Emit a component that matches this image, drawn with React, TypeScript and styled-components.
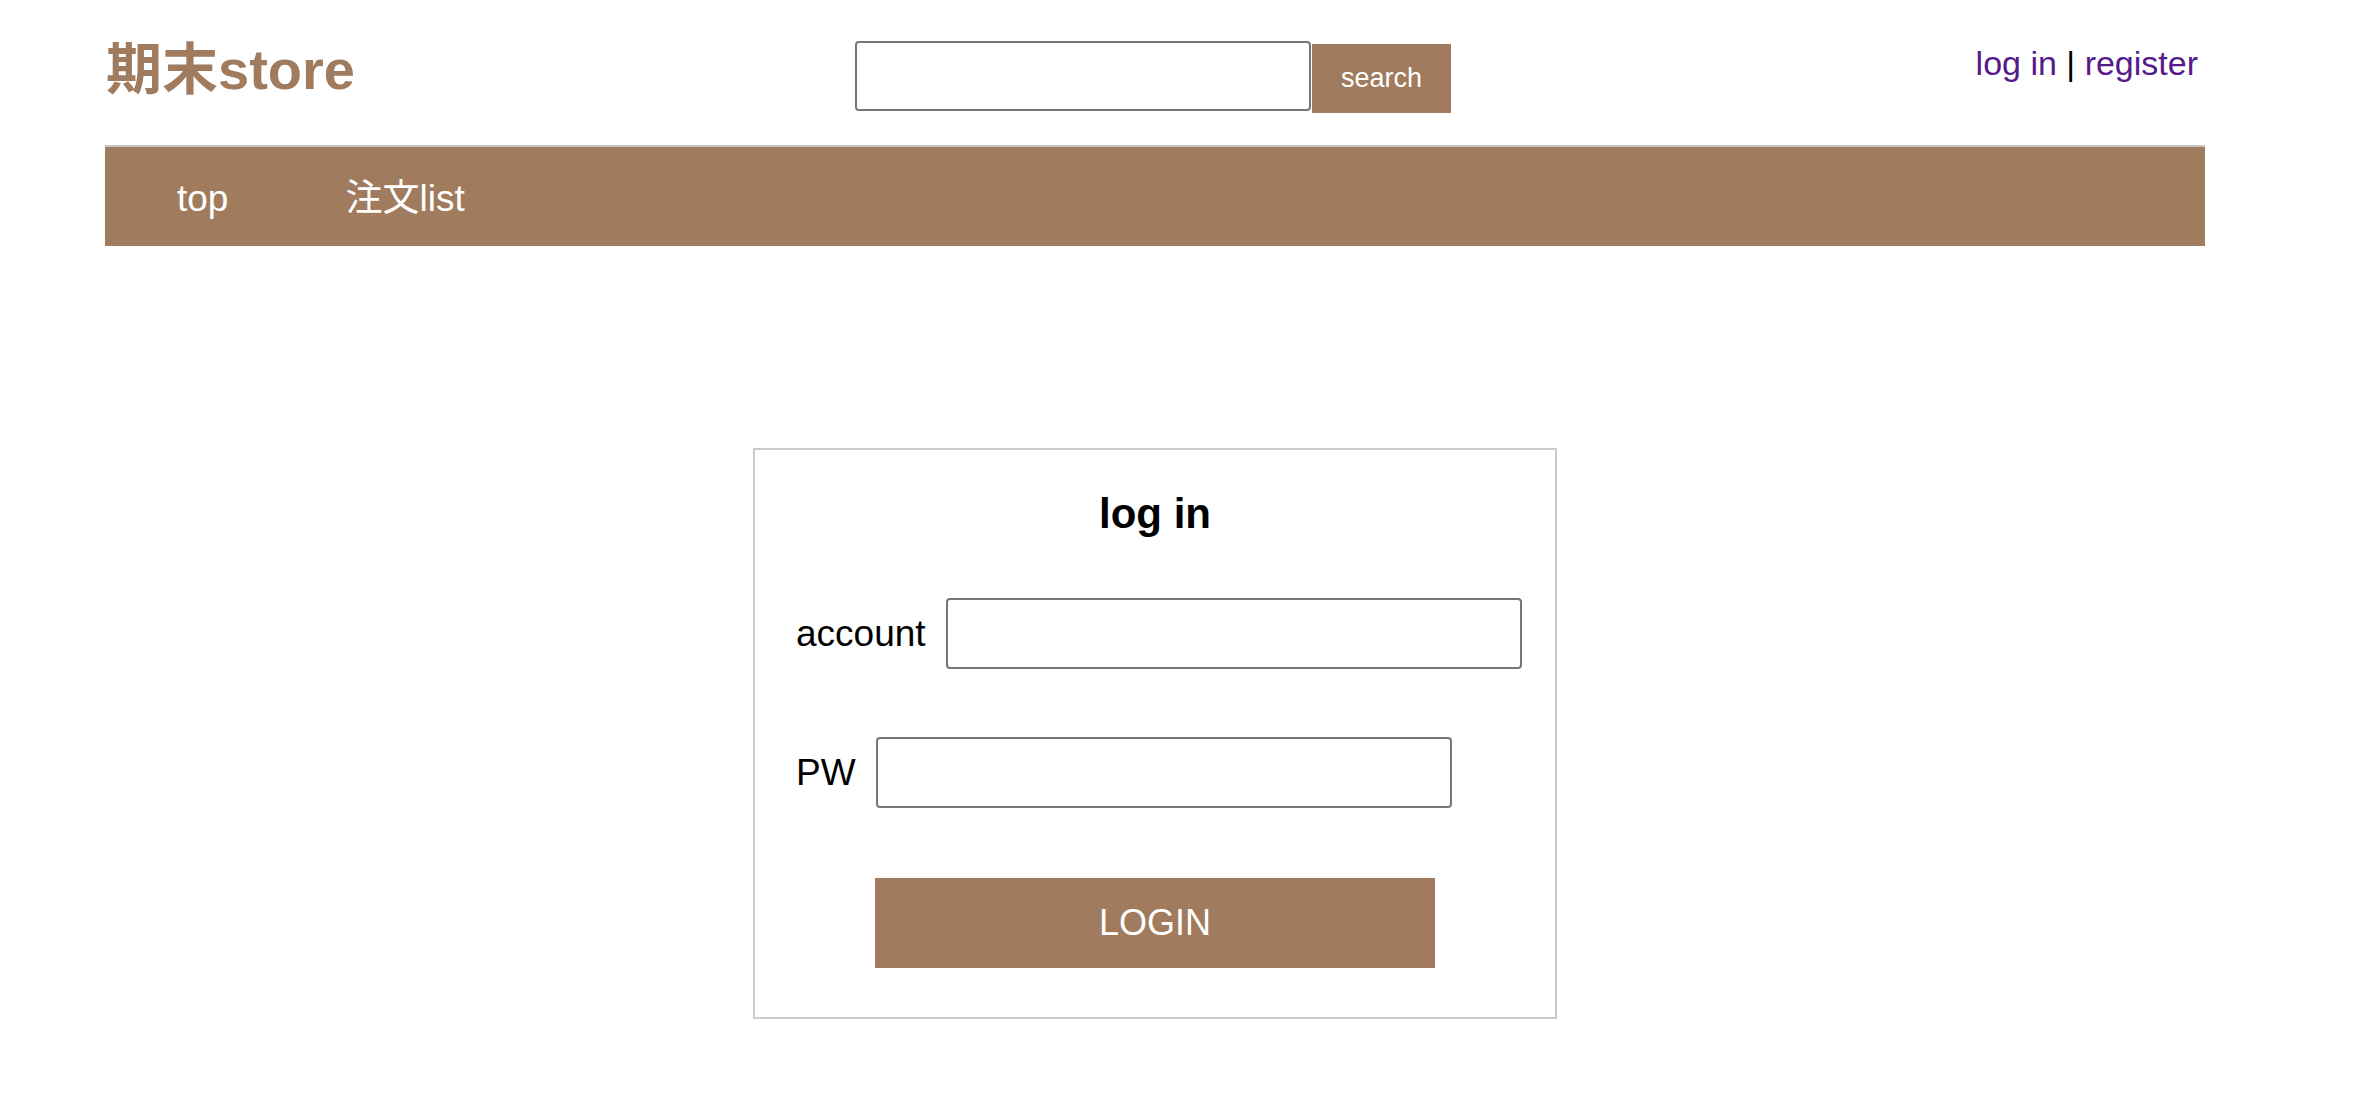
import React from "react";
import styled, { createGlobalStyle } from "styled-components";

const brown = "#a07b5d";

const GlobalStyle = createGlobalStyle`
  html, body {
    margin: 0;
    padding: 0;
    background: #ffffff;
  }
  body {
    font-family: "Liberation Sans", "Noto Sans CJK JP", Arial, sans-serif;
    color: #000;
  }
`;

const Page = styled.div`
  width: 2100px;
  margin-left: 105px;
`;

const Header = styled.header`
  height: 145px;
  display: flex;
  align-items: flex-start;
`;

const Logo = styled.h1`
  margin: 42px 0 0 1px;
  font-size: 56px;
  line-height: 1;
  font-weight: 700;
  color: ${brown};
  white-space: nowrap;
`;

const SearchForm = styled.form`
  display: flex;
  align-items: flex-start;
  margin: 41px 0 0 500px;
`;

const SearchInput = styled.input`
  box-sizing: border-box;
  width: 456px;
  height: 70px;
  border: 2px solid #767676;
  border-radius: 4px;
  padding: 0 8px;
  font-size: 26px;
  outline: none;
`;

const SearchButton = styled.button`
  box-sizing: border-box;
  width: 139px;
  height: 69px;
  margin: 3px 0 0 1px;
  border: none;
  background: ${brown};
  color: #fff;
  font-family: "Liberation Sans", Arial, sans-serif;
  font-size: 27px;
  cursor: pointer;
`;

const AuthLinks = styled.div`
  margin: 44px 7px 0 auto;
  font-size: 34px;
  line-height: 38px;
  white-space: nowrap;
`;

const AuthLink = styled.a`
  color: #551a8b;
  text-decoration: none;
`;

const Nav = styled.nav`
  box-sizing: border-box;
  height: 101px;
  border-top: 2px solid #c6c6c6;
  background: ${brown};
  display: flex;
  align-items: center;
  padding-left: 72px;
  gap: 117px;
`;

const NavItem = styled.a`
  display: block;
  color: #fff;
  font-size: 37px;
  line-height: 44px;
  text-decoration: none;
  padding-top: 4px;
`;

const Main = styled.main`
  display: flex;
  justify-content: center;
  padding-top: 202px;
`;

const LoginBox = styled.form`
  box-sizing: border-box;
  width: 804px;
  border: 2px solid #cacaca;
  padding: 40px 41px 49px;
  display: flex;
  flex-direction: column;
`;

const Title = styled.h2`
  margin: 0;
  text-align: center;
  font-size: 42px;
  line-height: 48px;
  font-weight: 700;
`;

const Row = styled.label<{ $top: number }>`
  display: flex;
  align-items: center;
  gap: 20px;
  margin-top: ${(p) => p.$top}px;
  font-size: 37px;
  white-space: nowrap;
`;

const Field = styled.input`
  box-sizing: border-box;
  flex-shrink: 0;
  width: 576px;
  height: 71px;
  border: 2px solid #767676;
  border-radius: 4px;
  padding: 0 8px;
  font-size: 30px;
  outline: none;
`;

const LoginButton = styled.button`
  align-self: center;
  width: 560px;
  height: 90px;
  margin-top: 70px;
  border: none;
  background: ${brown};
  color: #fff;
  font-family: "Liberation Sans", Arial, sans-serif;
  font-size: 36px;
  cursor: pointer;
`;

export default function App() {
  return (
    <>
      <GlobalStyle />
      <Page>
        <Header>
          <Logo>期末store</Logo>
          <SearchForm onSubmit={(e) => e.preventDefault()}>
            <SearchInput type="text" />
            <SearchButton type="submit">search</SearchButton>
          </SearchForm>
          <AuthLinks>
            <AuthLink href="#">log in</AuthLink> | <AuthLink href="#">register</AuthLink>
          </AuthLinks>
        </Header>
        <Nav>
          <NavItem href="#">top</NavItem>
          <NavItem href="#">注文list</NavItem>
        </Nav>
        <Main>
          <LoginBox onSubmit={(e) => e.preventDefault()}>
            <Title>log in</Title>
            <Row $top={60}>
              account
              <Field type="text" />
            </Row>
            <Row $top={68}>
              PW
              <Field type="password" />
            </Row>
            <LoginButton type="submit">LOGIN</LoginButton>
          </LoginBox>
        </Main>
      </Page>
    </>
  );
}
